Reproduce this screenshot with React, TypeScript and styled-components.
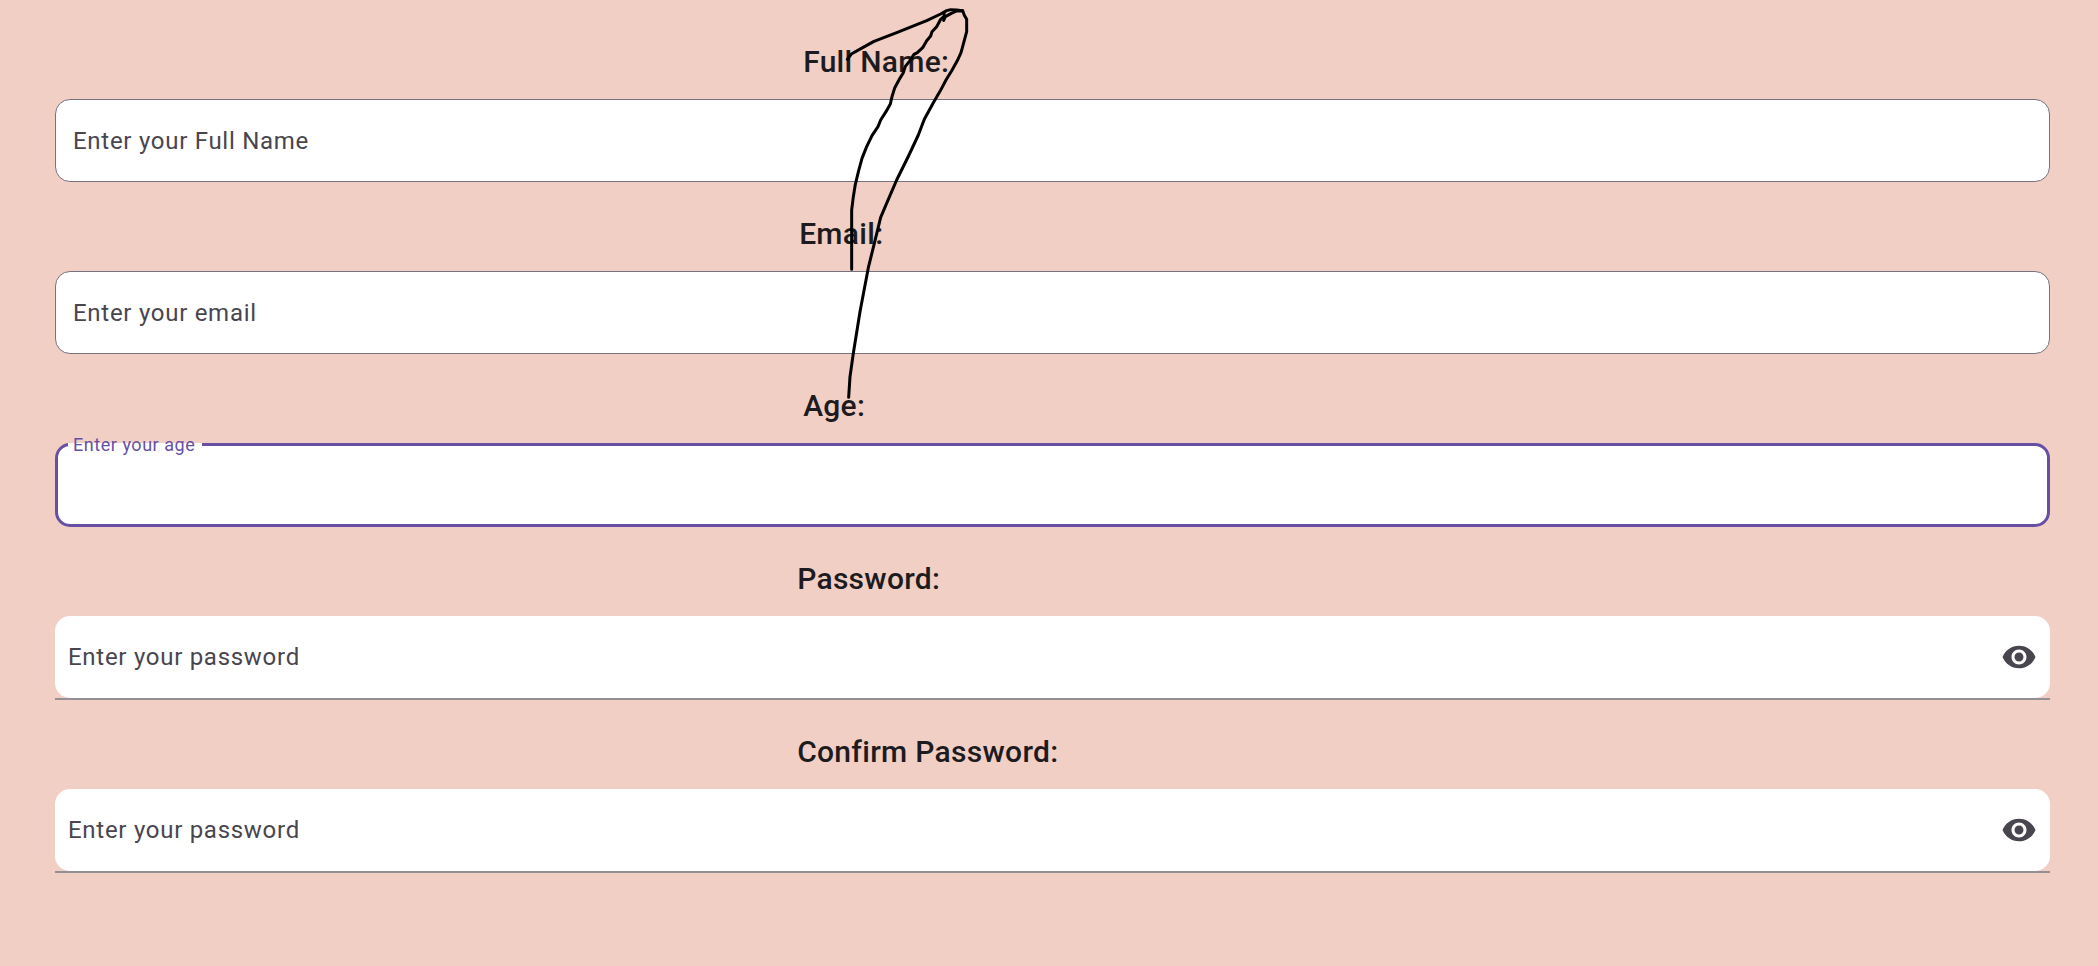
import React, { useState } from 'react';
import styled, { createGlobalStyle, css } from 'styled-components';
import { MdVisibility } from 'react-icons/md';

const GlobalStyle = createGlobalStyle`
  *, *::before, *::after { box-sizing: border-box; }
  body {
    margin: 0;
    background: #f1cfc4;
    font-family: Roboto, sans-serif;
  }
`;

const Page = styled.main`
  position: relative;
  min-height: 100vh;
  padding: 44px 48px 44px 55px;
`;

const Form = styled.form`
  display: flex;
  flex-direction: column;
  gap: 34px;
`;

const Field = styled.div`
  display: flex;
  flex-direction: column;
  gap: 19px;
`;

const FieldLabel = styled.label<{ $indent: string }>`
  padding-left: ${(p) => p.$indent};
  font-size: 30px;
  line-height: 36px;
  font-weight: 500;
  letter-spacing: 0.01em;
  color: #1d1b20;
`;

type Variant = 'outlined' | 'focused' | 'filled';

const variants = {
  outlined: css`
    height: 83px;
    padding: 0 17px;
    border: 1px solid #76727f;
    border-radius: 15px;
    background: #fff;
  `,
  focused: css`
    height: 84px;
    padding: 0 15px;
    border: 3px solid #6750a4;
    border-radius: 15px;
    background: #fff;
  `,
  filled: css`
    height: 84px;
    padding: 0 13px;
    border-bottom: 2px solid #938f94;

    &::before {
      content: '';
      position: absolute;
      inset: 0;
      z-index: -1;
      border-radius: 15px;
      background: #fff;
    }
  `,
};

const InputBox = styled.div<{ $variant: Variant }>`
  position: relative;
  z-index: 0;
  display: flex;
  align-items: center;
  ${(p) => variants[p.$variant]}
`;

const Input = styled.input`
  flex: 1;
  min-width: 0;
  height: 100%;
  padding: 0;
  border: 0;
  outline: 0;
  background: transparent;
  font-family: inherit;
  font-size: 24px;
  letter-spacing: 0.03em;
  color: #1d1b20;

  &::placeholder {
    color: #49454f;
    opacity: 1;
  }
`;

const FloatingLabel = styled.label`
  position: absolute;
  top: -14px;
  left: 10px;
  padding: 0 7px 0 5px;
  font-size: 18px;
  line-height: 26px;
  letter-spacing: 0.03em;
  color: #6750a4;

  &::before {
    content: '';
    position: absolute;
    z-index: -1;
    top: 11px;
    left: 0;
    right: 0;
    height: 3px;
    background: #fff;
  }
`;

const RevealButton = styled.button`
  display: flex;
  padding: 0;
  border: 0;
  background: none;
  color: #49454f;
  cursor: pointer;
`;

const Scribble = styled.svg`
  position: absolute;
  top: 0;
  left: 780px;
  width: 220px;
  height: 430px;
  pointer-events: none;
  fill: none;
  stroke: #000;
  stroke-width: 9;
  stroke-linecap: round;
  stroke-linejoin: round;
`;

interface FieldData {
  id: string;
  label: string;
  hint: string;
  variant: Variant;
  indent: string;
}

const fields: FieldData[] = [
  { id: 'name', label: 'Full Name:', hint: 'Enter your Full Name', variant: 'outlined', indent: '37.5%' },
  { id: 'email', label: 'Email:', hint: 'Enter your email', variant: 'outlined', indent: '37.3%' },
  { id: 'age', label: 'Age:', hint: 'Enter your age', variant: 'focused', indent: '37.5%' },
  { id: 'password', label: 'Password:', hint: 'Enter your password', variant: 'filled', indent: '37.2%' },
  { id: 'confirm', label: 'Confirm Password:', hint: 'Enter your password', variant: 'filled', indent: '37.2%' },
];

function FormField({ id, label, hint, variant, indent }: FieldData) {
  const [visible, setVisible] = useState(false);
  const secret = variant === 'filled';
  const floating = variant === 'focused';
  return (
    <Field>
      <FieldLabel htmlFor={id} $indent={indent}>{label}</FieldLabel>
      <InputBox $variant={variant}>
        {floating && <FloatingLabel htmlFor={id}>{hint}</FloatingLabel>}
        <Input
          id={id}
          type={secret && !visible ? 'password' : 'text'}
          placeholder={floating ? undefined : hint}
        />
        {secret && (
          <RevealButton type="button" aria-label="Show password" onClick={() => setVisible(!visible)}>
            <MdVisibility size={36} />
          </RevealButton>
        )}
      </InputBox>
    </Field>
  );
}

export default function App() {
  return (
    <>
      <GlobalStyle />
      <Page>
        <Form>
          {fields.map((field) => (
            <FormField key={field.id} {...field} />
          ))}
        </Form>
        <Scribble viewBox="0 0 660 1290" aria-hidden="true">
          <path d="M202 178L214 162L248 143L282 124L352 97L440 62L482 42L500 32L512 29L530 30L548 32" />
          <path d="M492 38L493 48L482 58L470 80L456 95L452 108L440 122L428 143L412 158L402 163L390 182L376 199L370 218L358 238L344 264L336 290L331 312L318 335L302 360L294 380L276 407L260 440L246 475L236 512L226 553L220 590L215 630L215 808" />
          <path d="M491 61L496 50L514 40L530 33L548 32L553 46L560 58L560 95L552 125L543 158L533 180L515 212L498 240L480 274L460 308L433 358L415 405L387 465L350 540L325 598L302 652L283 730L265 803L240 935L220 1060L210 1130L206 1192" />
        </Scribble>
      </Page>
    </>
  );
}
